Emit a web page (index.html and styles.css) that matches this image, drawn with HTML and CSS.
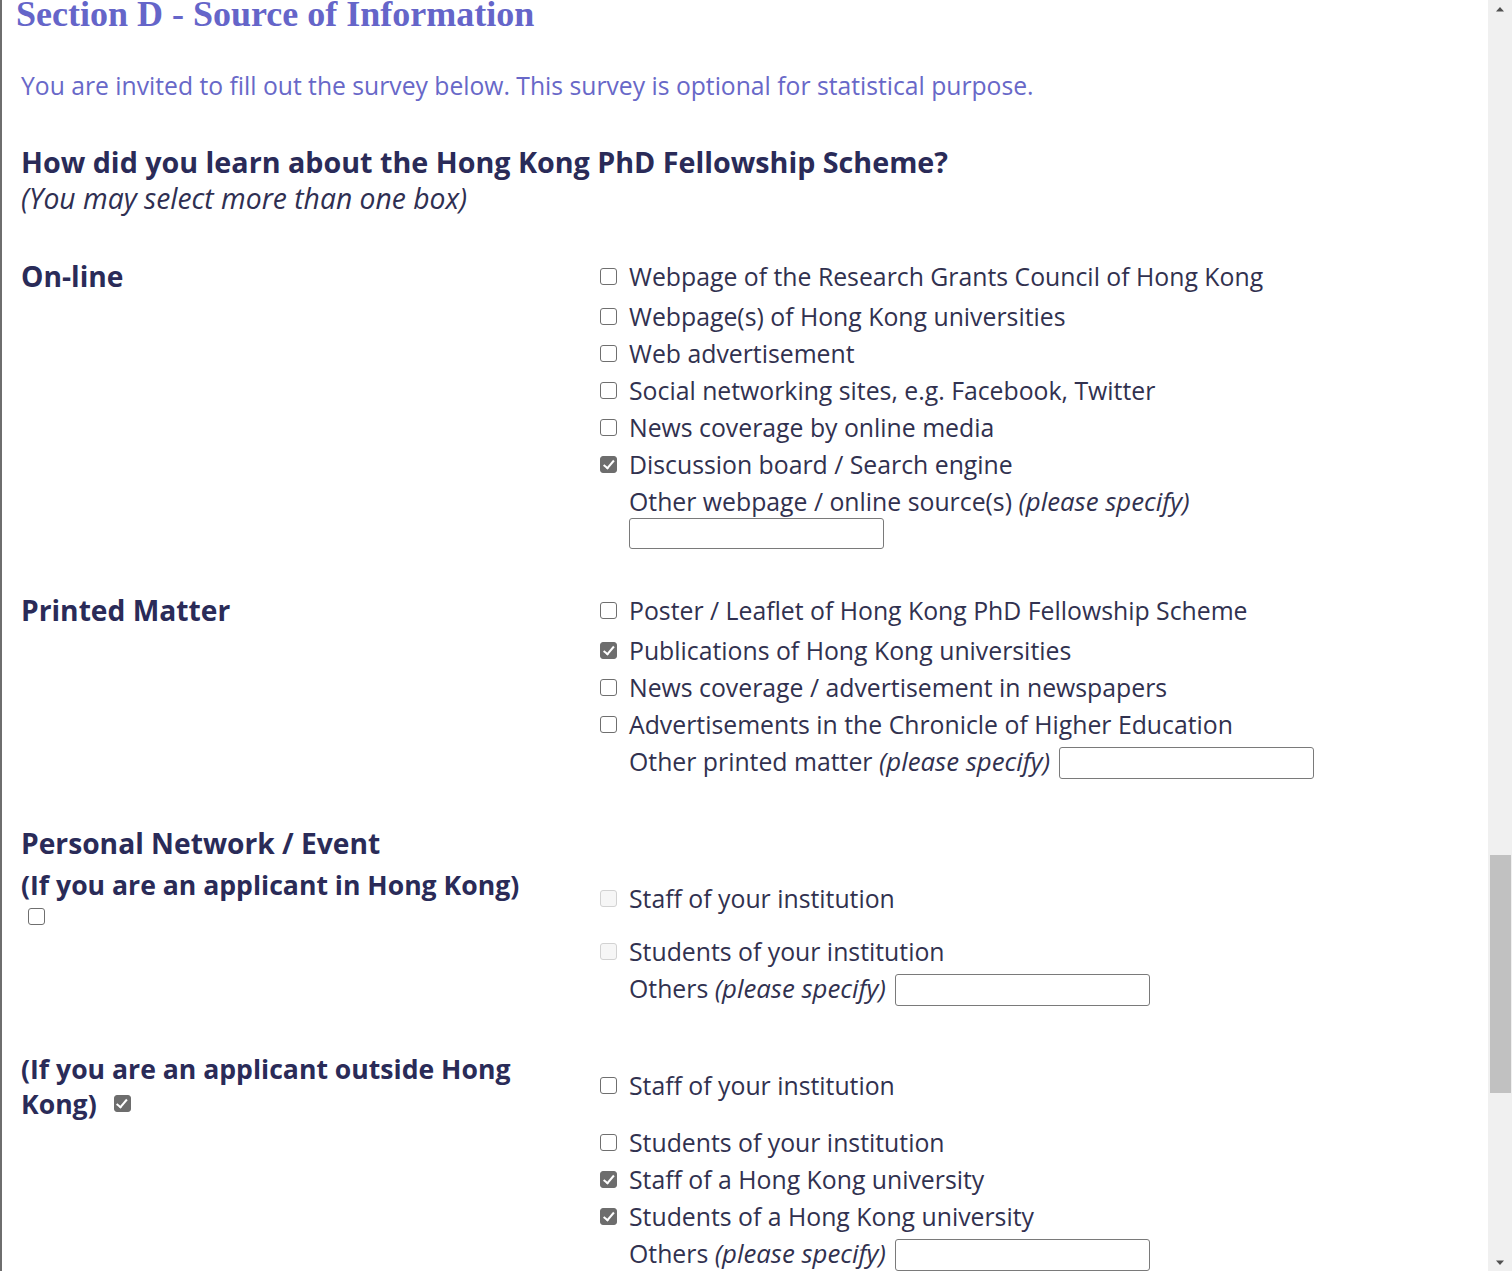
FILE: index.html
```html
<!DOCTYPE html>
<html lang="en">
<head>
<meta charset="utf-8">
<title>Section D - Source of Information</title>
<link rel="stylesheet" href="styles.css">
</head>
<body>
<div class="screen">
  <main class="page">
    <h1 class="title">Section D - Source of Information</h1>
    <p class="intro">You are invited to fill out the survey below. This survey is optional for statistical purpose.</p>
    <h2 class="question">How did you learn about the Hong Kong PhD Fellowship Scheme?</h2>
    <p class="hint">(You may select more than one box)</p>

    <section class="group online">
      <h3 class="label">On-line</h3>
      <div class="opts">
        <label class="opt first"><input type="checkbox"><span>Webpage of the Research Grants Council of Hong Kong</span></label>
        <label class="opt"><input type="checkbox"><span>Webpage(s) of Hong Kong universities</span></label>
        <label class="opt"><input type="checkbox"><span>Web advertisement</span></label>
        <label class="opt"><input type="checkbox"><span>Social networking sites, e.g. Facebook, Twitter</span></label>
        <label class="opt"><input type="checkbox"><span>News coverage by online media</span></label>
        <label class="opt"><input type="checkbox" checked><span>Discussion board / Search engine</span></label>
        <div class="opt plain">Other webpage / online source(s) <i>(please specify)</i></div>
        <input class="field block" type="text">
      </div>
    </section>

    <section class="group printed">
      <h3 class="label">Printed Matter</h3>
      <div class="opts">
        <label class="opt first"><input type="checkbox"><span>Poster / Leaflet of Hong Kong PhD Fellowship Scheme</span></label>
        <label class="opt"><input type="checkbox" checked><span>Publications of Hong Kong universities</span></label>
        <label class="opt"><input type="checkbox"><span>News coverage / advertisement in newspapers</span></label>
        <label class="opt"><input type="checkbox"><span>Advertisements in the Chronicle of Higher Education</span></label>
        <div class="opt plain">Other printed matter <i>(please specify)</i> <input class="field" type="text"></div>
      </div>
    </section>

    <section class="personal">
      <h3 class="label">Personal Network / Event</h3>

      <div class="sub sub-hk">
        <div class="sublabel">
          <div>(If you are an applicant in Hong Kong)</div>
          <input class="box-left" type="checkbox">
        </div>
        <div class="opts">
          <label class="opt"><input type="checkbox" disabled><span>Staff of your institution</span></label>
          <label class="opt second"><input type="checkbox" disabled><span>Students of your institution</span></label>
          <div class="opt plain">Others <i>(please specify)</i> <input class="field" type="text"></div>
        </div>
      </div>

      <div class="sub sub-out">
        <div class="sublabel wrap">(If you are an applicant outside Hong Kong) <input class="box-inline" type="checkbox" checked></div>
        <div class="opts">
          <label class="opt"><input type="checkbox"><span>Staff of your institution</span></label>
          <label class="opt second"><input type="checkbox"><span>Students of your institution</span></label>
          <label class="opt"><input type="checkbox" checked><span>Staff of a Hong Kong university</span></label>
          <label class="opt"><input type="checkbox" checked><span>Students of a Hong Kong university</span></label>
          <div class="opt plain">Others <i>(please specify)</i> <input class="field" type="text"></div>
        </div>
      </div>
    </section>
  </main>

  <div class="scrollbar" aria-hidden="true">
    <div class="arrow">
      <svg width="10" height="6" viewBox="0 0 10 6"><path d="M1 5.5 L5 1 L9 5.5 Z" fill="#505050"/></svg>
    </div>
    <div class="track"><div class="thumb"></div></div>
    <div class="arrow">
      <svg width="10" height="6" viewBox="0 0 10 6"><path d="M1 0.5 L5 5 L9 0.5 Z" fill="#505050"/></svg>
    </div>
  </div>
</div>
</body>
</html>
```

FILE: styles.css
```css
html, body {
  margin: 0;
  padding: 0;
  height: 100%;
  overflow: hidden;
  background: #ffffff;
}

.screen {
  display: flex;
  height: 1271px;
  overflow: hidden;
}

.page {
  flex: 1;
  border-left: 2px solid #6e6e6e;
  padding-left: 19px;
  font-family: "Open Sans", "Noto Sans", sans-serif;
  color: #31314f;
  overflow: hidden;
}

.title {
  margin: -6px 0 0 -5px;
  font-family: "Liberation Serif", "Times New Roman", serif;
  font-size: 36px;
  line-height: 40px;
  font-weight: 700;
  color: #6565c9;
}

.intro {
  margin: 33px 0 0;
  font-size: 24.7px;
  line-height: 37px;
  color: #6868c8;
}

.question {
  margin: 40px 0 0;
  font-size: 28.7px;
  line-height: 36px;
  font-weight: 700;
  color: #2a2b58;
}

.hint {
  margin: 0;
  font-size: 28.3px;
  line-height: 36px;
  font-style: italic;
  color: #2f2f52;
}

.group {
  display: grid;
  grid-template-columns: 577px 1fr;
}

.online { margin-top: 42px; }
.printed { margin-top: 43px; }

.label {
  margin: 0;
  font-size: 28.2px;
  line-height: 37px;
  font-weight: 700;
  color: #2a2b58;
}

.opts {
  font-size: 24.8px;
  line-height: 37px;
}

.opt {
  display: grid;
  grid-template-columns: 31px auto;
  align-items: center;
  justify-content: start;
}

.opt.first { margin-bottom: 3px; }

.opt.plain {
  display: block;
  padding-left: 31px;
}

.opt i {
  font-style: italic;
  font-size: 1.04em;
}

input[type="checkbox"] {
  appearance: none;
  -webkit-appearance: none;
  box-sizing: border-box;
  position: relative;
  width: 17px;
  height: 17px;
  margin: 0 0 0 2px;
  border: 1.5px solid #6f6f6f;
  border-radius: 3px;
  background: #ffffff;
}

input[type="checkbox"]:checked {
  background: #6d6d6d;
  border-color: #6d6d6d;
}

input[type="checkbox"]:checked::after {
  content: "";
  position: absolute;
  left: 4.5px;
  top: 1px;
  width: 4px;
  height: 8.5px;
  border: solid #ffffff;
  border-width: 0 2.3px 2.3px 0;
  transform: rotate(40deg);
}

input[type="checkbox"]:disabled {
  border-color: #d2d2d2;
  background: #f6f6f6;
}

.field {
  box-sizing: border-box;
  width: 255px;
  height: 32px;
  border: 1px solid #7a7a7a;
  border-radius: 3px;
  background: #fff;
  vertical-align: middle;
  margin: -3px 0 0 3px;
  padding: 0 4px;
  font: inherit;
  font-size: 16px;
}

.field.block {
  display: block;
  margin: -2px 0 0 31px;
  height: 31px;
}

.personal { margin-top: 45px; }

.sub {
  display: grid;
  grid-template-columns: 577px 1fr;
}

.sublabel {
  font-size: 26.6px;
  line-height: 35px;
  font-weight: 700;
  color: #2a2b58;
}

.sublabel.wrap { padding-right: 40px; }

.sub-hk { margin-top: 6px; }
.sub-hk .opts { padding-top: 12px; }
.sub-hk .opt.second { margin-top: 16px; }

.sub-out { margin-top: 45px; }
.sub-out .opts { padding-top: 15px; }
.sub-out .opt.second { margin-top: 20px; }

.sublabel .box-left {
  display: block;
  margin: 5px 0 0 7px;
}

.sublabel .box-inline {
  vertical-align: middle;
  margin: -6px 0 0 10px;
}

.scrollbar {
  width: 24px;
  background: #f0f0f0;
  display: flex;
  flex-direction: column;
}

.arrow {
  height: 17px;
  display: flex;
  align-items: center;
  justify-content: center;
}

.track {
  flex: 1;
  display: flex;
  flex-direction: column;
  padding-top: 838px;
}

.thumb {
  height: 238px;
  margin: 0 1px 0 2px;
  background: #c1c1c1;
}
```
